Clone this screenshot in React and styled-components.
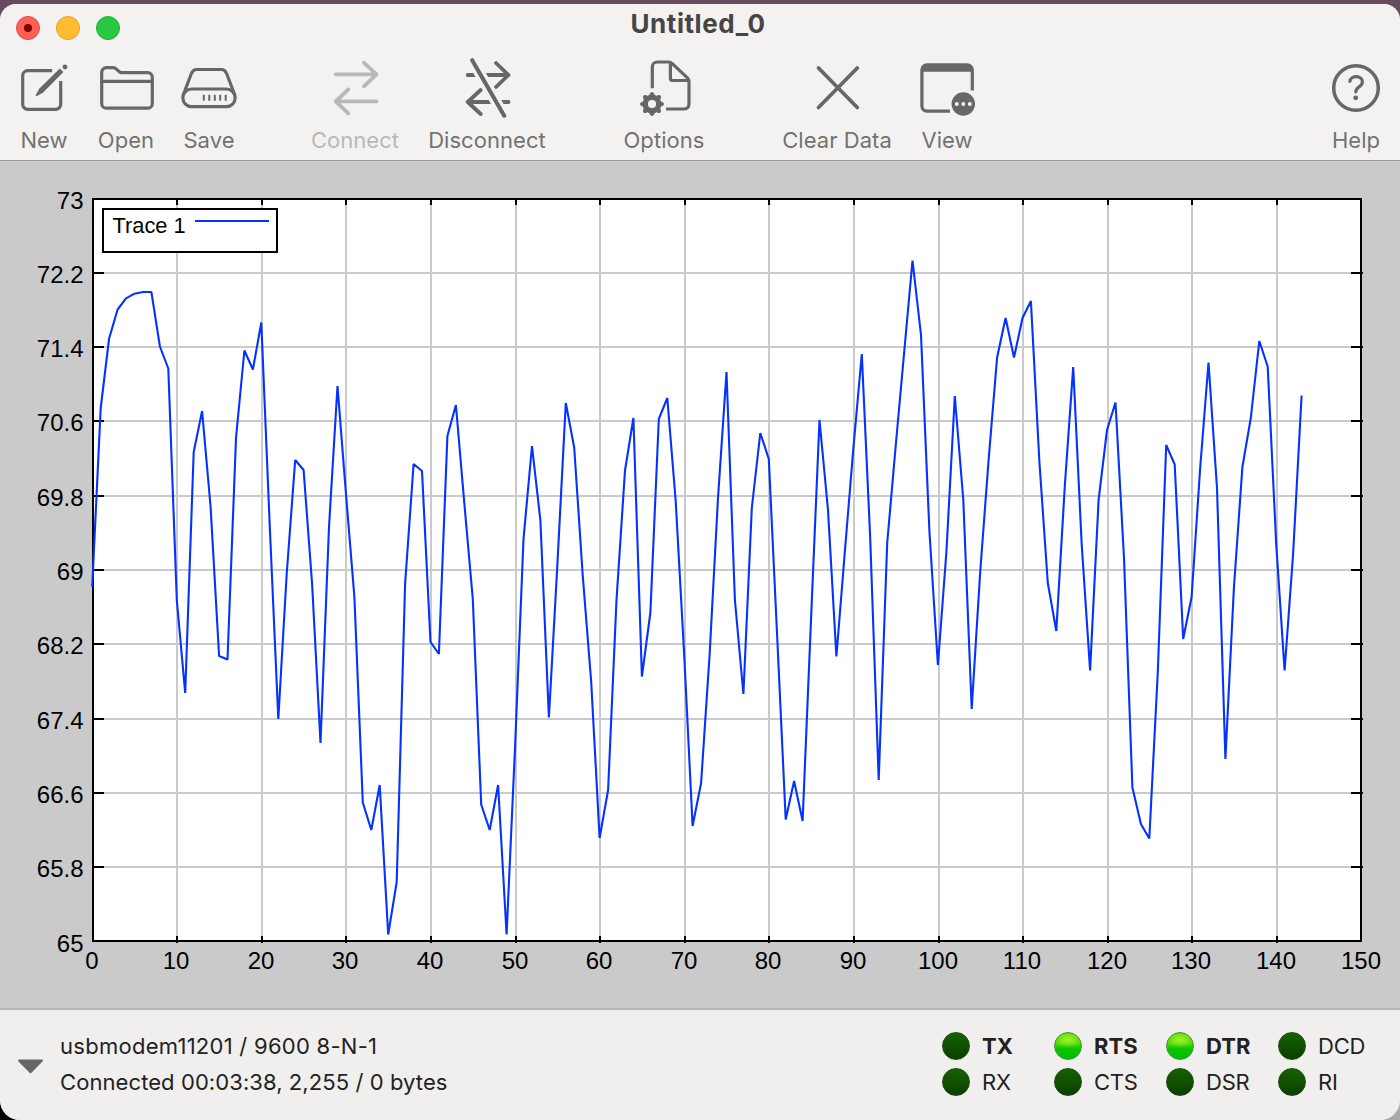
import React from "react";
import styled, { createGlobalStyle } from "styled-components";

const GlobalStyle = createGlobalStyle`
  * { box-sizing: border-box; }
  body {
    margin: 0;
    width: 1400px;
    height: 1120px;
    overflow: hidden;
    font-family: Inter, "Liberation Sans", sans-serif;
  }
`;

const Desktop = styled.div`
  width: 1400px;
  height: 1120px;
  padding-top: 4px;
  background: linear-gradient(90deg, transparent 50%, #a9a9ab 50%) 0 20px no-repeat,
    linear-gradient(#654c5e 0 24px, #000 24px);
`;

const Window = styled.main`
  display: flex;
  flex-direction: column;
  height: 1116px;
  overflow: hidden;
  border-radius: 16px 16px 20px 20px;
  background: #cacaca;
`;

const Header = styled.header`
  height: 157px;
  background: #f3f2f1;
  border-bottom: 1px solid #9c9c9c;
`;

const TitleBar = styled.div`
  display: grid;
  grid-template-columns: 1fr auto 1fr;
  align-items: center;
  height: 48px;
  padding: 0 20px 0 16px;
`;

const Lights = styled.div`
  display: flex;
  gap: 16px;
`;

const Light = styled.span`
  display: grid;
  place-items: center;
  width: 24px;
  height: 24px;
  border-radius: 50%;
  background: ${(p) => p.$fill};
  border: 1px solid ${(p) => p.$edge};
`;

const EditedDot = styled.span`
  width: 8px;
  height: 8px;
  border-radius: 50%;
  background: #7a0300;
`;

const Title = styled.h1`
  margin: 0;
  padding-bottom: 8px;
  font-size: 26px;
  font-weight: 700;
  line-height: 30px;
  letter-spacing: 0.55px;
  color: #454545;
`;

const Toolbar = styled.nav`
  display: flex;
  padding: 6px 20px 0 22px;
`;

const Tool = styled.button`
  display: flex;
  flex-direction: column;
  align-items: center;
  flex: none;
  width: ${(p) => p.$width}px;
  margin-left: ${(p) => (p.$push ? "auto" : `${p.$gap || 0}px`)};
  padding: 0;
  border: 0;
  background: none;
  font: inherit;
  color: ${(p) => (p.$dim ? "#b9b8b7" : "#676767")};
`;

const Icon = styled.svg`
  flex: none;
  width: 60px;
  height: 60px;
  fill: none;
  stroke: currentColor;
  stroke-width: 3.2;
  stroke-linecap: round;
  stroke-linejoin: round;
`;

const ToolLabel = styled.span`
  margin-top: 9px;
  font-size: 22px;
  line-height: 26px;
  letter-spacing: 0.05px;
  white-space: nowrap;
  color: ${(p) => (p.$dim ? "#b9b8b7" : "#727272")};
`;

const PlotArea = styled.section`
  height: 847px;
`;

const Plot = styled.svg`
  display: block;
  width: 1400px;
  height: 847px;
  font-family: "Liberation Sans", Arial, sans-serif;
`;

const Footer = styled.footer`
  display: flex;
  align-items: flex-start;
  height: 112px;
  padding: 18px 0 0 17px;
  background: #f0efed;
  border-top: 2px solid #b5b5b5;
`;

const Disclosure = styled.svg`
  width: 27px;
  height: 15px;
  margin: 31px 16px 0 0;
  fill: #676767;
  stroke: #676767;
  stroke-width: 2;
  stroke-linejoin: round;
`;

const Status = styled.div`
  font-size: 22px;
  line-height: 36px;
  white-space: nowrap;
  color: #222;
`;

const StatusLine = styled.div`
  letter-spacing: ${(p) => p.$track}px;
`;

const Signals = styled.div`
  display: grid;
  grid-template-columns: repeat(4, 112px);
  grid-auto-rows: 36px;
  margin-left: auto;
  margin-right: 10px;
`;

const Signal = styled.div`
  display: flex;
  align-items: center;
  gap: 12px;
  font-size: 22px;
  font-weight: ${(p) => (p.$bold ? 700 : 400)};
  letter-spacing: ${(p) => (p.$bold ? 0.1 : -0.25)}px;
  color: #222;
`;

const Led = styled.span`
  width: 28px;
  height: 28px;
  border-radius: 50%;
  background: ${(p) =>
    p.$on
      ? "radial-gradient(ellipse 13px 8px at 50% 28%, #a2f52c 0%, #86ea1200 100%), linear-gradient(#5bdc00 0%, #4fdb00 40%, #0cc400 60%, #00bd00 100%)"
      : "linear-gradient(#176400, #0b3c00)"};
  border: 1px solid ${(p) => (p.$on ? "#3f9a2a" : "#124d04")};
  background-origin: border-box;
`;

const GEAR_TEETH = [0, 45, 90, 135];

const icons = {
  edit: (
    <>
      <path d="M38.2 12.7H13.7a5 5 0 0 0-5 5V46.3a5 5 0 0 0 5 5H41.7a5 5 0 0 0 5-5V23" strokeLinecap="butt" />
      <path d="M45.8 10.4L49.4 14L29.2 34.4L22.6 38.2Q21.4 38.4 21.8 37L25.2 30.8Z" fill="currentColor" stroke="none" />
      <circle cx="51" cy="9" r="2.4" fill="currentColor" stroke="none" />
    </>
  ),
  folder: (
    <>
      <path d="M5.7 45.7V14.2a4.5 4.5 0 0 1 4.5-4.5H17c4.5 0 5 5 9 5H51.8a4.5 4.5 0 0 1 4.5 4.5V45.7a4.5 4.5 0 0 1-4.5 4.5H10.2a4.5 4.5 0 0 1-4.5-4.5Z" />
      <path d="M6 23.4H56" strokeLinecap="butt" />
    </>
  ),
  drive: (
    <>
      <rect x="3.8" y="31" width="52.4" height="17.6" rx="8.8" />
      <path d="M4.4 36.5L12.4 15.5Q14 11.5 17.5 11.5H42.5Q46 11.5 47.6 15.5L55.6 36.5" />
      <path d="M24.8 36.7v6M30.3 36.7v6M35.8 36.7v6M41.2 36.7v6M46.7 36.7v6" strokeWidth="2" strokeLinecap="butt" />
    </>
  ),
  connect: (
    <path d="M10.7 16.3H51.5M39 4.8L51.5 16.3L39 28.3M51.5 43.3H10.7M23.3 31.5L10.7 43.3L23.3 55.3" strokeWidth="3.8" />
  ),
  disconnect: (
    <>
      <path d="M10.7 17H51.5M39 5L51.5 17L39 29M51.5 44H10.7M23.7 32L10.7 44L23.7 56" strokeWidth="3.8" />
      <path d="M12 -3.5L50.3 63.5" stroke="#f3f2f1" strokeWidth="11" strokeLinecap="butt" />
      <path d="M15.2 2.2L47.2 57.8" strokeWidth="4.1" />
    </>
  ),
  options: (
    <>
      <path
        d="M18.3 30.3V9a5 5 0 0 1 5-5H34.5q2.2 0 3.8 1.6L53.4 19.8q1.6 1.6 1.6 3.8V46a5 5 0 0 1-5 5H32M36.4 4.4V20.2q0 2.3 2.3 2.3H54.5"
        strokeLinecap="butt"
      />
      <g transform="translate(18 46)" stroke="currentColor">
        <circle r="6.8" strokeWidth="5.4" />
        {GEAR_TEETH.map((a) => (
          <path key={a} d="M0-10.7V-8M0 8V10.7" transform={`rotate(${a})`} strokeWidth="4.6" strokeLinecap="butt" />
        ))}
        {GEAR_TEETH.map((a) => (
          <path key={`t${a}`} d="M0-10.4V-9M0 9V10.4" transform={`rotate(${a})`} strokeWidth="3.2" />
        ))}
      </g>
    </>
  ),
  clear: <path d="M11.5 10L50.3 49.5M50.3 10L11.5 49.5" strokeWidth="3.8" />,
  view: (
    <>
      <path d="M33 53.1H9.9a5 5 0 0 1-5-5V11.8a5 5 0 0 1 5-5H50.3a5 5 0 0 1 5 5V32.5" strokeLinecap="butt" />
      <path d="M4.9 13.7V11.8a5 5 0 0 1 5-5H50.3a5 5 0 0 1 5 5V13.7Z" fill="currentColor" stroke="none" />
      <circle cx="46.3" cy="46" r="11.7" fill="currentColor" stroke="none" />
      <path d="M39.8 46h.01M46.3 46h.01M52.8 46h.01" stroke="#f3f2f1" strokeWidth="4" />
    </>
  ),
  help: (
    <>
      <circle cx="30" cy="30" r="22.3" strokeWidth="3.5" />
      <path d="M23.9 23.4C24.6 17 36.4 17 36.4 23.9C36.4 28.8 29.8 28.8 29.8 33.8" strokeWidth="3.2" />
      <circle cx="29.7" cy="39.8" r="2.4" fill="currentColor" stroke="none" />
    </>
  ),
};

const tools = [
  { label: "New", icon: "edit", width: 44 },
  { label: "Open", icon: "folder", width: 56, gap: 32 },
  { label: "Save", icon: "drive", width: 50, gap: 30 },
  { label: "Connect", icon: "connect", width: 88, gap: 77, dim: true },
  { label: "Disconnect", icon: "disconnect", width: 118, gap: 29 },
  { label: "Options", icon: "options", width: 82, gap: 77 },
  { label: "Clear Data", icon: "clear", width: 110, gap: 77 },
  { label: "View", icon: "view", width: 50, gap: 30 },
  { label: "Help", icon: "help", width: 48, push: true },
];

const signals = [
  { name: "TX", bold: true },
  { name: "RTS", bold: true, on: true },
  { name: "DTR", bold: true, on: true },
  { name: "DCD" },
  { name: "RX" },
  { name: "CTS" },
  { name: "DSR" },
  { name: "RI" },
];

// One level per sample, in window pixels; samples are 8.457px apart.
const levels = [
  587, 408, 338.5, 309.5, 298.3, 293.7, 292, 292, 346.5, 368.5,
  600, 693, 452, 411, 507, 656, 659.5, 438, 350.5, 369.5,
  322.5, 527, 719, 574, 460, 470, 584, 743, 527, 386,
  493, 597, 802.5, 830, 785, 934.5, 882, 584, 464, 471,
  642, 654, 436, 405, 503, 599, 804.5, 830, 785, 934.5,
  746, 539, 446, 520.5, 717.5, 566, 403, 447.5, 575, 682,
  838, 790, 600, 470.5, 418, 676.5, 612.5, 419, 398, 501,
  655, 826, 783, 655, 498, 372, 600, 694, 508, 433,
  459, 637, 819.5, 781, 821, 620, 420, 510, 656.5, 551,
  449, 354, 538, 780, 543, 447, 353, 260.5, 335, 531,
  665, 552, 396, 500, 709, 572, 460, 357.5, 318, 357.5,
  318, 301, 462, 583, 631, 486, 367, 544.5, 670.5, 500,
  430, 402.5, 558, 787.5, 824, 838.5, 672, 445, 464.5, 639,
  597, 469, 362.5, 488, 759, 588, 467, 418, 341, 366.5,
  544, 670.5, 554, 395.5,
];

const xTicks = [93, 177, 262, 346, 431, 516, 600, 685, 769, 854, 939, 1023, 1108, 1192, 1277, 1362];
const yTicks = [
  [199, "73"],
  [273, "72.2"],
  [347, "71.4"],
  [421, "70.6"],
  [496, "69.8"],
  [570, "69"],
  [644, "68.2"],
  [719, "67.4"],
  [793, "66.6"],
  [867, "65.8"],
  [942, "65"],
];

function Chart() {
  const trace = levels.map((y, i) => `${(92.2 + i * 8.457).toFixed(1)},${y}`).join(" ");
  const innerX = xTicks.slice(1, -1);
  const innerY = yTicks.slice(1, -1).map(([y]) => y);
  return (
    <Plot viewBox="0 161 1400 847">
      <rect x="93" y="200" width="1268" height="741" fill="#fff" />
      <g stroke="#cacaca" strokeWidth="2">
        {innerX.map((x) => (
          <line key={x} x1={x} x2={x} y1="200" y2="941" />
        ))}
        {innerY.map((y) => (
          <line key={y} x1="93" x2="1361" y1={y} y2={y} />
        ))}
      </g>
      <g stroke="#000" strokeWidth="2">
        {innerX.map((x) => (
          <path key={x} d={`M${x} 199V205M${x} 936V943`} />
        ))}
        {innerY.map((y) => (
          <path key={y} d={`M93 ${y}H104M1351 ${y}H1363`} />
        ))}
        <rect x="93" y="199" width="1268" height="742" fill="none" />
        <rect x="103" y="209" width="174" height="43" fill="#fff" />
      </g>
      <line x1="195" x2="269" y1="221" y2="221" stroke="#0433ff" strokeWidth="2" />
      <text x="112.5" y="233" fontSize="21.8">Trace 1</text>
      <polyline points={trace} fill="none" stroke="#0433ff" strokeWidth="2.1" strokeLinejoin="bevel" />
      <g fontSize="24" textAnchor="end">
        {yTicks.map(([y, label]) => (
          <text key={label} x="83.5" y={y + 9.5}>{label}</text>
        ))}
      </g>
      <g fontSize="24" textAnchor="middle">
        {xTicks.map((x, i) => (
          <text key={x} x={x - 1} y="969">{i * 10}</text>
        ))}
      </g>
    </Plot>
  );
}

export default function App() {
  return (
    <>
      <GlobalStyle />
      <Desktop>
        <Window>
          <Header>
            <TitleBar>
              <Lights>
                <Light $fill="#ff5f57" $edge="#e24b41">
                  <EditedDot />
                </Light>
                <Light $fill="#febc2e" $edge="#e1a325" />
                <Light $fill="#28c840" $edge="#24ab38" />
              </Lights>
              <Title>Untitled_0</Title>
            </TitleBar>
            <Toolbar>
              {tools.map((t) => (
                <Tool key={t.label} $width={t.width} $gap={t.gap} $push={t.push} $dim={t.dim}>
                  <Icon viewBox="0 0 60 60">{icons[t.icon]}</Icon>
                  <ToolLabel $dim={t.dim}>{t.label}</ToolLabel>
                </Tool>
              ))}
            </Toolbar>
          </Header>
          <PlotArea>
            <Chart />
          </PlotArea>
          <Footer>
            <Disclosure viewBox="0 0 27 15">
              <path d="M2 1.5H25L13.5 13.2Z" />
            </Disclosure>
            <Status>
              <StatusLine $track={0.27}>usbmodem11201 / 9600 8-N-1</StatusLine>
              <StatusLine $track={0.08}>Connected 00:03:38, 2,255 / 0 bytes</StatusLine>
            </Status>
            <Signals>
              {signals.map((s) => (
                <Signal key={s.name} $bold={s.bold}>
                  <Led $on={s.on} />
                  {s.name}
                </Signal>
              ))}
            </Signals>
          </Footer>
        </Window>
      </Desktop>
    </>
  );
}
